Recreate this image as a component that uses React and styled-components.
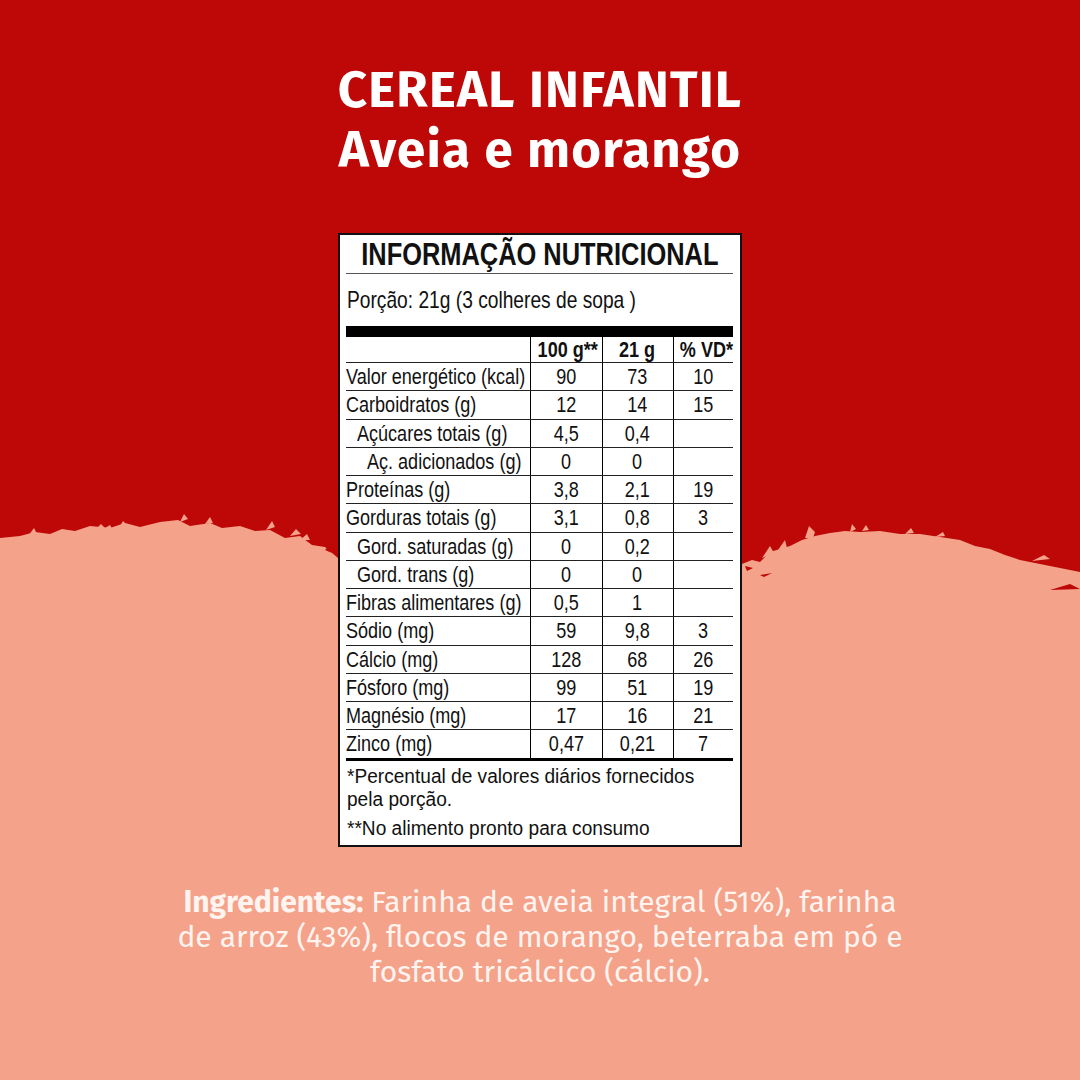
import React from "react";
import styled, { createGlobalStyle } from "styled-components";

const RED = "#BE0707";
const SALMON = "#F4A28A";

const edge = [
  [0, 538], [20, 536], [35, 532], [50, 534], [62, 529], [75, 531], [90, 526], [110, 528], [125, 523], [140, 527],
  [160, 522], [178, 520], [190, 526], [210, 523], [222, 528], [240, 526], [255, 531], [270, 530], [285, 538],
  [300, 536], [312, 545], [325, 547], [338, 558], [742, 564], [752, 560], [760, 562], [770, 552], [780, 549],
  [790, 546], [802, 540], [815, 536], [830, 533], [845, 531], [860, 532], [880, 531], [900, 534], [920, 534],
  [940, 537], [960, 540], [975, 546], [990, 549], [1005, 555], [1020, 560], [1040, 564], [1060, 568], [1080, 572],
];
const edgePath = "M" + edge.map((p) => p.join(" ")).join(" L") + " L1080 1080 L0 1080 Z";

const specks =
  "M28 536 l6 -8 l3 6 Z M95 530 l6 -6 l4 4 l5 -3 l3 5 Z M120 526 l3 -5 l4 4 Z M180 522 l4 -8 l4 5 Z " +
  "M205 524 l5 -7 l3 6 Z M266 530 l6 -9 l3 6 Z M290 536 l6 -7 l5 5 Z M300 540 l7 -6 l3 6 Z " +
  "M762 558 l8 -12 l4 7 Z M778 550 l7 -10 l2 8 Z M805 538 l4 -12 l6 6 l-2 6 Z M850 532 l2 -8 l4 5 Z " +
  "M862 531 l4 -6 l3 5 Z M905 534 l6 -6 l3 5 Z M935 537 l8 -5 l2 4 Z M1032 561 l12 -6 l6 4 Z";
const redSpecks = "M318 547 l7 3 l3 -3 l4 6 Z M745 566 l8 2 l-6 3 Z M760 575 l12 -2 l-8 4 Z M1050 590 l20 -6 l10 5 Z";

const bgSvg = `<svg xmlns='http://www.w3.org/2000/svg' width='1080' height='1080' viewBox='0 0 1080 1080'><rect width='1080' height='1080' fill='${RED}'/><path d='${edgePath}' fill='${SALMON}'/><path d='${specks}' fill='${SALMON}'/><path d='${redSpecks}' fill='${RED}'/></svg>`;

const GlobalStyle = createGlobalStyle`
  html, body { margin: 0; padding: 0; }
  body { width: 1080px; height: 1080px; overflow: hidden; }
`;

const Page = styled.div`
  width: 1080px;
  height: 1080px;
  box-sizing: border-box;
  background: ${RED} url("data:image/svg+xml,${encodeURIComponent(bgSvg)}") no-repeat 0 0 / 1080px 1080px;
  display: flex;
  flex-direction: column;
  align-items: center;
  padding-top: 60px;
`;

const Heading = styled.h1`
  margin: 0;
  font-family: "Fira Sans", "Open Sans", sans-serif;
  font-weight: 700;
  font-size: 51px;
  line-height: 60px;
  color: #ffffff;
  text-align: center;
  letter-spacing: 1.2px;
`;

const Label = styled.div`
  margin-top: 53px;
  width: 404px;
  box-sizing: border-box;
  border: 2px solid #111;
  background: #fff;
  padding: 4px 7px 5px 6px;
  font-family: "Liberation Sans", Arial, sans-serif;
  color: #111;
`;

const Narrow = styled.span`
  display: inline-block;
  white-space: nowrap;
  transform: scaleX(${(p) => p.$scale || 0.82});
  transform-origin: ${(p) => (p.$center ? "center" : "left")} center;
`;

const LabelTitle = styled.div`
  display: flex;
  justify-content: center;
  font-weight: 700;
  font-size: 31px;
  line-height: 32px;
  padding: 0 0 2px;
  border-bottom: 1px solid #555;
`;

const Portion = styled.div`
  font-size: 23.4px;
  line-height: 22px;
  padding: 15px 0 0 1px;
  height: 37px;
`;

const ThickBar = styled.div`
  height: 11px;
  background: #000;
`;

const Table = styled.table`
  border-collapse: collapse;
  width: 387px;
  table-layout: fixed;
  font-size: 22px;
`;

const HeadCell = styled.th`
  font-weight: 700;
  font-size: 22px;
  height: 25px;
  padding: 0;
  text-align: center;
  vertical-align: middle;
  line-height: 24px;
  border-bottom: 1px solid #222;
  border-left: ${(p) => (p.$first ? "none" : "1px solid #000")};
`;

const Cell = styled.td`
  height: 26.25px;
  padding: 1px 0 0 ${(p) => p.$indent || 0}px;
  text-align: ${(p) => (p.$label ? "left" : "center")};
  vertical-align: middle;
  line-height: 24px;
  white-space: nowrap;
  border-bottom: ${(p) => (p.$last ? "3px solid #000" : "1px solid #222")};
  border-left: ${(p) => (p.$label ? "none" : "1px solid #000")};
`;

const Footnote = styled.div`
  font-size: 20px;
  line-height: 23px;
  padding: ${(p) => p.$top}px 0 0 1px;
`;

const Ingredients = styled.p`
  margin: 38px 0 0;
  width: 800px;
  font-family: "Fira Sans", "Open Sans", sans-serif;
  font-size: 30px;
  line-height: 35px;
  color: #fff4ef;
  text-align: center;
  strong { font-weight: 700; }
`;

const rows = [
  ["Valor energético (kcal)", "90", "73", "10", 0],
  ["Carboidratos (g)", "12", "14", "15", 0],
  ["Açúcares totais (g)", "4,5", "0,4", "", 11],
  ["Aç. adicionados (g)", "0", "0", "", 21],
  ["Proteínas (g)", "3,8", "2,1", "19", 0],
  ["Gorduras totais (g)", "3,1", "0,8", "3", 0],
  ["Gord. saturadas (g)", "0", "0,2", "", 11],
  ["Gord. trans (g)", "0", "0", "", 11],
  ["Fibras alimentares (g)", "0,5", "1", "", 0],
  ["Sódio (mg)", "59", "9,8", "3", 0],
  ["Cálcio (mg)", "128", "68", "26", 0],
  ["Fósforo (mg)", "99", "51", "19", 0],
  ["Magnésio (mg)", "17", "16", "21", 0],
  ["Zinco (mg)", "0,47", "0,21", "7", 0],
];

const colWidths = [184, 72, 71, 60];
const NOTE_SCALE = 0.955;

export default function App() {
  return (
    <Page>
      <GlobalStyle />
      <Heading>
        CEREAL INFANTIL
        <br />
        Aveia e morango
      </Heading>
      <Label>
        <LabelTitle>
          <Narrow $center>INFORMAÇÃO NUTRICIONAL</Narrow>
        </LabelTitle>
        <Portion>
          <Narrow>Porção: 21g (3 colheres de sopa )</Narrow>
        </Portion>
        <ThickBar />
        <Table>
          <colgroup>
            {colWidths.map((w) => (
              <col key={w} style={{ width: w }} />
            ))}
          </colgroup>
          <thead>
            <tr>
              <HeadCell $first />
              <HeadCell><Narrow $center>100 g**</Narrow></HeadCell>
              <HeadCell><Narrow $center>21 g</Narrow></HeadCell>
              <HeadCell><Narrow $center>% VD*</Narrow></HeadCell>
            </tr>
          </thead>
          <tbody>
            {rows.map((r, i) => {
              const last = i === rows.length - 1;
              return (
                <tr key={r[0]}>
                  <Cell $label $indent={r[4]} $last={last}><Narrow>{r[0]}</Narrow></Cell>
                  <Cell $last={last}><Narrow $center>{r[1]}</Narrow></Cell>
                  <Cell $last={last}><Narrow $center>{r[2]}</Narrow></Cell>
                  <Cell $last={last}><Narrow $center>{r[3]}</Narrow></Cell>
                </tr>
              );
            })}
          </tbody>
        </Table>
        <Footnote $top={4}>
          <Narrow $scale={NOTE_SCALE}>*Percentual de valores diários fornecidos</Narrow>
          <br />
          <Narrow $scale={NOTE_SCALE}>pela porção.</Narrow>
        </Footnote>
        <Footnote $top={6}>
          <Narrow $scale={NOTE_SCALE}>**No alimento pronto para consumo</Narrow>
        </Footnote>
      </Label>
      <Ingredients>
        <strong>Ingredientes:</strong> Farinha de aveia integral (51%), farinha
        <br />
        de arroz (43%), flocos de morango, beterraba em pó e
        <br />
        fosfato tricálcico (cálcio).
      </Ingredients>
    </Page>
  );
}
